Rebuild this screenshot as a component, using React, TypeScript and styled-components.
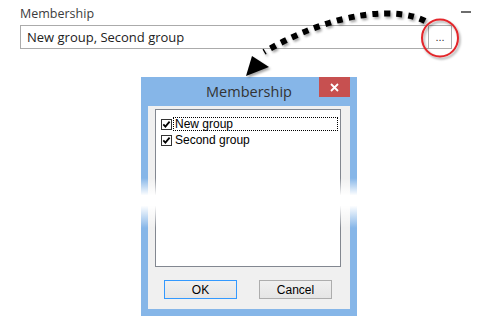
import React from 'react';
import styled, { createGlobalStyle } from 'styled-components';

const GlobalStyle = createGlobalStyle`
  html, body {
    margin: 0;
    padding: 0;
    background: #fff;
  }
  * {
    box-sizing: border-box;
  }
`;

const Page = styled.div`
  position: relative;
  width: 479px;
  height: 316px;
  overflow: hidden;
  padding-top: 5px;
  font-family: "Open Sans", "Liberation Sans", sans-serif;
`;

const Header = styled.div`
  display: flex;
  justify-content: space-between;
  margin-left: 20px;
  width: 451px;
  height: 17px;
`;

const Label = styled.div`
  font-size: 12.5px;
  line-height: 17px;
  color: #3c3c3c;
`;

const Collapse = styled.div`
  width: 10px;
  height: 2px;
  margin-top: 6px;
  background: #6d6d6d;
`;

const Field = styled.div`
  display: flex;
  width: 432px;
  height: 24px;
  margin: 3px 0 0 20px;
  border: 1px solid #ababab;
  background: #fff;
`;

const FieldValue = styled.div`
  flex: 1;
  padding-left: 6px;
  font-size: 13px;
  line-height: 22px;
  color: #222;
`;

const BrowseButton = styled.div`
  width: 23px;
  border-left: 1px solid #ababab;
  font-family: "Liberation Sans", sans-serif;
  font-size: 11px;
  line-height: 22px;
  text-align: center;
  color: #333;
`;

const Dialog = styled.div`
  position: relative;
  display: flex;
  flex-direction: column;
  width: 216px;
  height: 239px;
  margin: 28px 0 0 141px;
  padding: 0 7px 7px;
  background: #86b6e8;
`;

const TitleBar = styled.div`
  display: grid;
  grid-template-columns: 31px 1fr 31px;
  height: 29px;
`;

const Title = styled.div`
  grid-column: 2;
  text-align: center;
  font-size: 14.5px;
  line-height: 29px;
  color: #333;
`;

const CloseButton = styled.div`
  grid-column: 3;
  display: flex;
  align-items: center;
  justify-content: center;
  height: 20px;
  background: #c75050;
`;

const Client = styled.div`
  flex: 1;
  display: flex;
  flex-direction: column;
  padding: 3px 9px 0 7px;
  background: #f0f0f0;
`;

const ListBox = styled.div`
  height: 158px;
  padding: 6px 2px 0 5px;
  border: 1px solid #828790;
  background: #fff;
`;

const Item = styled.div`
  display: flex;
  align-items: center;
  height: 16px;
`;

const ItemLabel = styled.div<{ $focused?: boolean }>`
  flex: 1;
  height: 14px;
  margin-left: 1px;
  padding-left: 1px;
  border: 1px dotted ${(p) => (p.$focused ? '#000' : 'transparent')};
  font-family: "Liberation Sans", sans-serif;
  font-size: 12px;
  line-height: 12px;
  color: #000;
`;

const ButtonRow = styled.div`
  display: flex;
  justify-content: center;
  gap: 22px;
  margin-top: 13px;
`;

const DialogButton = styled.button<{ $default?: boolean }>`
  width: 73px;
  height: 19px;
  padding: 0;
  border: 1px solid ${(p) => (p.$default ? '#3399ff' : '#adadad')};
  background: linear-gradient(#f0f0f0, #e5e5e5);
  font-family: "Liberation Sans", sans-serif;
  font-size: 12px;
  color: #000;
`;

const TearFade = styled.div`
  position: absolute;
  top: 101px;
  left: -6px;
  right: -6px;
  height: 50px;
  background: linear-gradient(
    to bottom,
    rgba(255, 255, 255, 0) 0%,
    #fff 35%,
    #fff 55%,
    rgba(255, 255, 255, 0) 100%
  );
`;

const Annotation = styled.svg`
  position: absolute;
  top: 0;
  left: 0;
  pointer-events: none;
`;

const CheckBox = () => (
  <svg width="11" height="11" viewBox="0 0 11 11">
    <rect x="0.5" y="0.5" width="10" height="10" fill="#fff" stroke="#333" />
    <path d="M2.3 5.4 L4.4 7.6 L8.6 2.6" fill="none" stroke="#000" strokeWidth="1.8" />
  </svg>
);

const groups = [
  { name: 'New group', focused: true },
  { name: 'Second group', focused: false },
];

export default function App() {
  return (
    <Page>
      <GlobalStyle />
      <Header>
        <Label>Membership</Label>
        <Collapse />
      </Header>
      <Field>
        <FieldValue>New group, Second group</FieldValue>
        <BrowseButton>...</BrowseButton>
      </Field>

      <Dialog>
        <TitleBar>
          <Title>Membership</Title>
          <CloseButton>
            <svg width="9" height="9" viewBox="0 0 9 9">
              <path d="M1 1 L8 8 M8 1 L1 8" stroke="#fff" strokeWidth="1.8" />
            </svg>
          </CloseButton>
        </TitleBar>
        <Client>
          <ListBox>
            {groups.map((g) => (
              <Item key={g.name}>
                <CheckBox />
                <ItemLabel $focused={g.focused}>{g.name}</ItemLabel>
              </Item>
            ))}
          </ListBox>
          <ButtonRow>
            <DialogButton $default>OK</DialogButton>
            <DialogButton>Cancel</DialogButton>
          </ButtonRow>
        </Client>
        <TearFade />
      </Dialog>

      <Annotation width="479" height="316" viewBox="0 0 479 316">
        <defs>
          <filter id="shadow" x="-20%" y="-20%" width="140%" height="140%">
            <feDropShadow dx="1.5" dy="2" stdDeviation="1.3" floodColor="#000" floodOpacity="0.35" />
          </filter>
        </defs>
        <g filter="url(#shadow)">
          <path
            d="M425 21 C400 8, 340 8, 264 52"
            fill="none"
            stroke="#000"
            strokeWidth="6"
            strokeDasharray="6 6"
          />
          <polygon points="246,76 252,56 269,67" fill="#000" />
          <ellipse cx="440" cy="38" rx="18" ry="18.5" fill="none" stroke="#e3262b" strokeWidth="2" />
        </g>
      </Annotation>
    </Page>
  );
}
